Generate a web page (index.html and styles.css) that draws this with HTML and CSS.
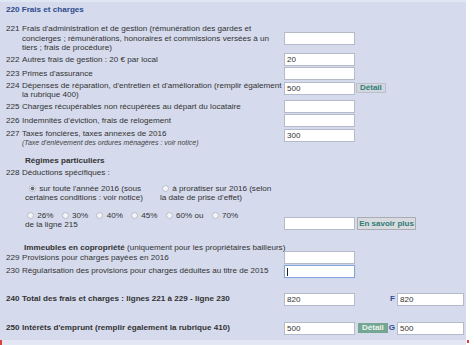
FILE: index.html
```html
<!DOCTYPE html>
<html lang="fr">
<head>
    <meta charset="UTF-8">
    <title>220 Frais et charges</title>
    <link rel="stylesheet" href="styles.css">
</head>
<body>
    <div class="panel">
        <div class="head">220 Frais et charges</div>

        <div class="row r221">
            <span class="num">221</span>
            <span class="lbl">Frais d'administration et de gestion (rémunération des gardes et<br>concierges ; rémunérations, honoraires et commissions versées à un<br>tiers ; frais de procédure)</span>
            <span class="fld"><input class="box" type="text"></span>
        </div>
        <div class="row r222">
            <span class="num">222</span>
            <span class="lbl">Autres frais de gestion : 20 € par local</span>
            <span class="fld"><input class="box" type="text" value="20"></span>
        </div>
        <div class="row r223">
            <span class="num">223</span>
            <span class="lbl">Primes d'assurance</span>
            <span class="fld"><input class="box" type="text"></span>
        </div>
        <div class="row r224 top">
            <span class="num">224</span>
            <span class="lbl">Dépenses de réparation, d'entretien et d'amélioration (remplir également<br>la rubrique 400)</span>
            <span class="fld"><input class="box" type="text" value="500"></span>
            <span class="extra"><button class="btn detail">Détail</button></span>
        </div>
        <div class="row r225">
            <span class="num">225</span>
            <span class="lbl">Charges récupérables non récupérées au départ du locataire</span>
            <span class="fld"><input class="box" type="text"></span>
        </div>
        <div class="row r226">
            <span class="num">226</span>
            <span class="lbl">Indemnités d'éviction, frais de relogement</span>
            <span class="fld"><input class="box" type="text"></span>
        </div>
        <div class="row r227 top">
            <span class="num">227</span>
            <span class="lbl">Taxes foncières, taxes annexes de 2016<br><i class="note">(Taxe d'enlèvement des ordures ménagères : voir notice)</i></span>
            <span class="fld"><input class="box" type="text" value="300"></span>
        </div>

        <div class="sub">Régimes particuliers</div>
        <div class="row r228">
            <span class="num">228</span>
            <span class="lbl">Déductions spécifiques :</span>
        </div>
        <div class="radios">
            <label class="opt opt1"><input class="rd" type="radio" name="ded" checked> sur toute l'année 2016 (sous<br>certaines conditions : voir notice)</label>
            <label class="opt opt2"><input class="rd" type="radio" name="ded"> à proratiser sur 2016 (selon<br>la date de prise d'effet)</label>
        </div>
        <div class="row rpct">
            <span class="num"></span>
            <span class="lbl pct">
                <label><input class="rd" type="radio" name="pct"> 26%</label>
                <label><input class="rd" type="radio" name="pct"> 30%</label>
                <label><input class="rd" type="radio" name="pct"> 40%</label>
                <label><input class="rd" type="radio" name="pct"> 45%</label>
                <label><input class="rd" type="radio" name="pct"> 60% ou</label>
                <label><input class="rd" type="radio" name="pct"> 70%</label><br>de la ligne 215
            </span>
            <span class="fld"><input class="box" type="text"></span>
            <span class="extra"><button class="btn more">En savoir plus</button></span>
        </div>

        <div class="sub sub2"><b>Immeubles en copropriété</b> (uniquement pour les propriétaires bailleurs)</div>
        <div class="row r229">
            <span class="num">229</span>
            <span class="lbl">Provisions pour charges payées en 2016</span>
            <span class="fld"><input class="box" type="text"></span>
        </div>
        <div class="row r230">
            <span class="num">230</span>
            <span class="lbl">Régularisation des provisions pour charges déduites au titre de 2015</span>
            <span class="fld caret"><input class="box focus" type="text"></span>
        </div>

        <div class="row r240 bold">
            <span class="num">240</span>
            <span class="lbl">Total des frais et charges : lignes 221 à 229 - ligne 230</span>
            <span class="fld"><input class="box" type="text" value="820"></span>
            <span class="extra end"><span class="letter">F</span><input class="box wide" type="text" value="820"></span>
        </div>
        <div class="row r250 bold">
            <span class="num">250</span>
            <span class="lbl">Intérêts d'emprunt (remplir également la rubrique 410)</span>
            <span class="fld"><input class="box" type="text" value="500"></span>
            <span class="extra split"><button class="btn detail on">Détail</button><span class="pair"><span class="letter">G</span><input class="box wide" type="text" value="500"></span></span>
        </div>
    </div>
    <div class="foot"></div>
</body>
</html>
```

FILE: styles.css
```css
:root {
    --panel: #d5daec;
    --title: #2d4b8e;
    --text: #333333;
    --teal: #2e7d76;
}

body {
    margin: 0;
    background: #ffffff;
    font-family: 'Liberation Sans', Arial, sans-serif;
    font-size: 8.1px;
    color: var(--text);
}

.panel {
    width: 466px;
    height: 340px;
    box-sizing: border-box;
    background: var(--panel);
    border-top: 2px solid #dfe6f4;
    padding: 0 2px 0 5px;
    line-height: 9.5px;
}

.head {
    height: 15px;
    line-height: 15px;
    margin-bottom: 7px;
    color: var(--title);
    font-weight: bold;
    padding-left: 1px;
}

.row {
    display: grid;
    grid-template-columns: 17px 262px 72px 1fr;
    align-items: center;
    height: 14px;
}

.row.top {
    align-items: start;
}

.num {
    padding-left: 1px;
}

.box {
    display: block;
    width: 71px;
    height: 13px;
    box-sizing: border-box;
    margin: 0;
    padding: 0 2px;
    border: 1px solid #b6bbc9;
    background: #ffffff;
    font: 8px 'Liberation Sans', Arial, sans-serif;
    color: var(--text);
}

.box.wide {
    width: 67px;
}

.box.focus {
    border-color: #85a6d6;
    box-shadow: 0 0 1px #9fbbe4;
}

.caret {
    position: relative;
}

.caret::after {
    content: "";
    position: absolute;
    left: 3px;
    top: 3px;
    width: 1px;
    height: 8px;
    background: #222;
}

.extra {
    display: flex;
    align-items: center;
}

.btn {
    margin: 0;
    padding: 0 2px;
    font: bold 8px 'Liberation Sans', Arial, sans-serif;
    color: var(--teal);
    background: #d2d6e0;
    border: 1px solid #bcc0ca;
    white-space: nowrap;
    cursor: pointer;
}

.btn.detail {
    height: 10px;
    line-height: 8px;
    padding: 0 3px;
}

.btn.detail.on {
    margin-left: 2px;
    background: #74a793;
    border-color: #74a793;
    color: #eef5ee;
}

.btn.more {
    height: 13px;
    width: 59px;
    padding: 0;
    margin-left: 1px;
    background: #d9dadf;
    border-color: #a9acb3;
}

/* lignes particulieres */
.r221 { height: 28.5px; }
.r221 .num { align-self: start; }
.r224 { height: 19px; }
.r224 .box { margin-top: 1px; }
.r224 .extra { padding-top: 2px; }
.r227 { height: 20px; }
.r227 .box { margin-top: 1px; }
.r227 .lbl,
.r227 .num { padding-top: 1px; }

.note {
    font-size: 7px;
    color: #444;
}

.sub {
    margin-top: 8px;
    padding-left: 20px;
    height: 9.5px;
    font-weight: bold;
}

.r228 {
    margin-top: 2.5px;
    height: 9.5px;
}

.radios {
    display: flex;
    margin-top: 6.5px;
    padding-left: 20px;
    height: 19px;
}

.opt {
    display: block;
}

.opt1 {
    width: 135px;
    text-indent: 4px;
}

.opt2 {
    text-indent: 2px;
}

.rd {
    appearance: none;
    width: 7px;
    height: 7px;
    margin: 0 1px 0 0;
    border: 1px solid #b9bdc9;
    border-radius: 50%;
    background: #f3f4f7;
    vertical-align: -1px;
}

.rd:checked {
    background: radial-gradient(circle, #6b6e76 0 1.6px, #f3f4f7 2.2px);
}

.rpct {
    margin-top: 8px;
    height: 19px;
    align-items: end;
}

.pct {
    padding-left: 3px;
}

.pct label {
    margin-right: 6px;
}

.pct label:first-child {
    margin-left: 2px;
}

.sub2 {
    margin-top: 13.5px;
    padding-left: 19px;
    height: 8px;
    font-weight: normal;
}

.r229 { height: 13px; }
.r230 { height: 14px; }

.r240 { margin-top: 14px; }
.r250 { margin-top: 15px; }

.bold .num,
.bold .lbl {
    font-weight: bold;
}

.letter {
    color: var(--title);
    font-weight: bold;
    margin-right: 2px;
}

.end {
    justify-content: flex-end;
}

.split {
    justify-content: space-between;
}

.pair {
    display: flex;
    align-items: center;
}

.foot {
    width: 474px;
    height: 5px;
    background:
        linear-gradient(#d9443a, #d9443a) 0 0 / 2px 5px no-repeat,
        linear-gradient(#d9443a, #d9443a) 467px 0 / 2px 3px no-repeat,
        linear-gradient(#e3e8f4, #e3e8f4) 0 0 / 466px 5px no-repeat;
}
```
